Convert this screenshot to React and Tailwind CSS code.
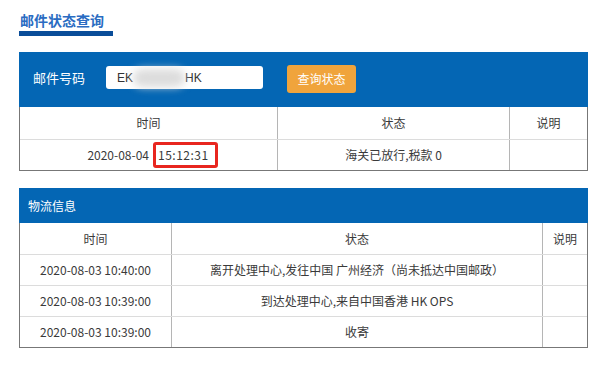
import React from "react";

const ff = "font-['Noto_Sans_CJK_SC','Noto_Sans',sans-serif]";

function Cell({ w, children, left, className = "" }) {
  return (
    <div
      className={`flex items-center justify-center ${left ? "border-l border-[#b5b5b5]" : ""} ${className}`}
      style={{ width: w }}
    >
      {children}
    </div>
  );
}

export default function App() {
  const rows = [
    ["2020-08-03 10:40:00", "离开处理中心,发往中国 广州经济（尚未抵达中国邮政）"],
    ["2020-08-03 10:39:00", "到达处理中心,来自中国香港 HK OPS"],
    ["2020-08-03 10:39:00", "收寄"],
  ];
  return (
    <div className={`w-[600px] h-[383px] bg-white overflow-hidden ${ff} text-[12px] text-[#3a3a3a]`}>
      <div className="pl-[19px] pt-[10px]">
        <div className="text-[14px] font-bold text-[#2a6cc2] pl-[1px] leading-[20px]">邮件状态查询</div>
        <div className="w-[94px] h-[5px] bg-[#0a4d99] mt-[1px]"></div>

        {/* Panel 1 */}
        <div className="w-[569px] mt-[16px]">
          <div className="h-[55px] bg-[#0466b4] flex items-start">
            <div className="w-[87px] pl-[14px] mt-[16px] leading-[20px] text-white text-[13px]">邮件号码</div>
            <div className="w-[157px] h-[23px] mt-[14px] bg-white rounded-[3px] flex items-center pl-[11px] text-[12px] text-[#333] font-['Liberation_Sans',sans-serif]">
              <span>EK</span>
              <span className="inline-block w-[52px] h-[18px] bg-[#dcdcdc] blur-[4px] rounded-full"></span>
              <span>HK</span>
            </div>
            <div className="ml-[24px] mt-[13px] w-[69px] h-[28px] bg-[#f0a43c] rounded-[3px] flex items-center justify-center text-white text-[12px]">
              查询状态
            </div>
          </div>
          <div className="border-x border-b border-[#777] bg-white">
            <div className="flex h-[32px]">
              <Cell w={257}>时间</Cell>
              <Cell w={232} left>状态</Cell>
              <Cell w={78} left>说明</Cell>
            </div>
            <div className="flex h-[31px] border-t border-[#dcdcdc]">
              <Cell w={257}>
                <span className="ml-[8px]">2020-08-04</span>
                <span className="ml-[4px] inline-block border-[3px] border-[#e8261f] rounded-[3px] pl-[2px] pr-[6px] leading-[20px] tracking-[0.5px]">15:12:31</span>
              </Cell>
              <Cell w={232} left>海关已放行,税款 0</Cell>
              <Cell w={78} left></Cell>
            </div>
          </div>
        </div>

        {/* Panel 2 */}
        <div className="w-[569px] mt-[17px]">
          <div className="h-[35px] bg-[#0466b4] flex items-center pl-[9px] text-white text-[12px]">物流信息</div>
          <div className="border-x border-b border-[#777] bg-white">
            <div className="flex h-[31px]">
              <Cell w={151}>时间</Cell>
              <Cell w={371} left>状态</Cell>
              <Cell w={45} left>说明</Cell>
            </div>
            {rows.map((r, i) => (
              <div key={i} className="flex h-[31px] border-t border-[#dcdcdc]">
                <Cell w={151}>{r[0]}</Cell>
                <Cell w={371} left>{r[1]}</Cell>
                <Cell w={45} left></Cell>
              </div>
            ))}
          </div>
        </div>
      </div>
    </div>
  );
}
